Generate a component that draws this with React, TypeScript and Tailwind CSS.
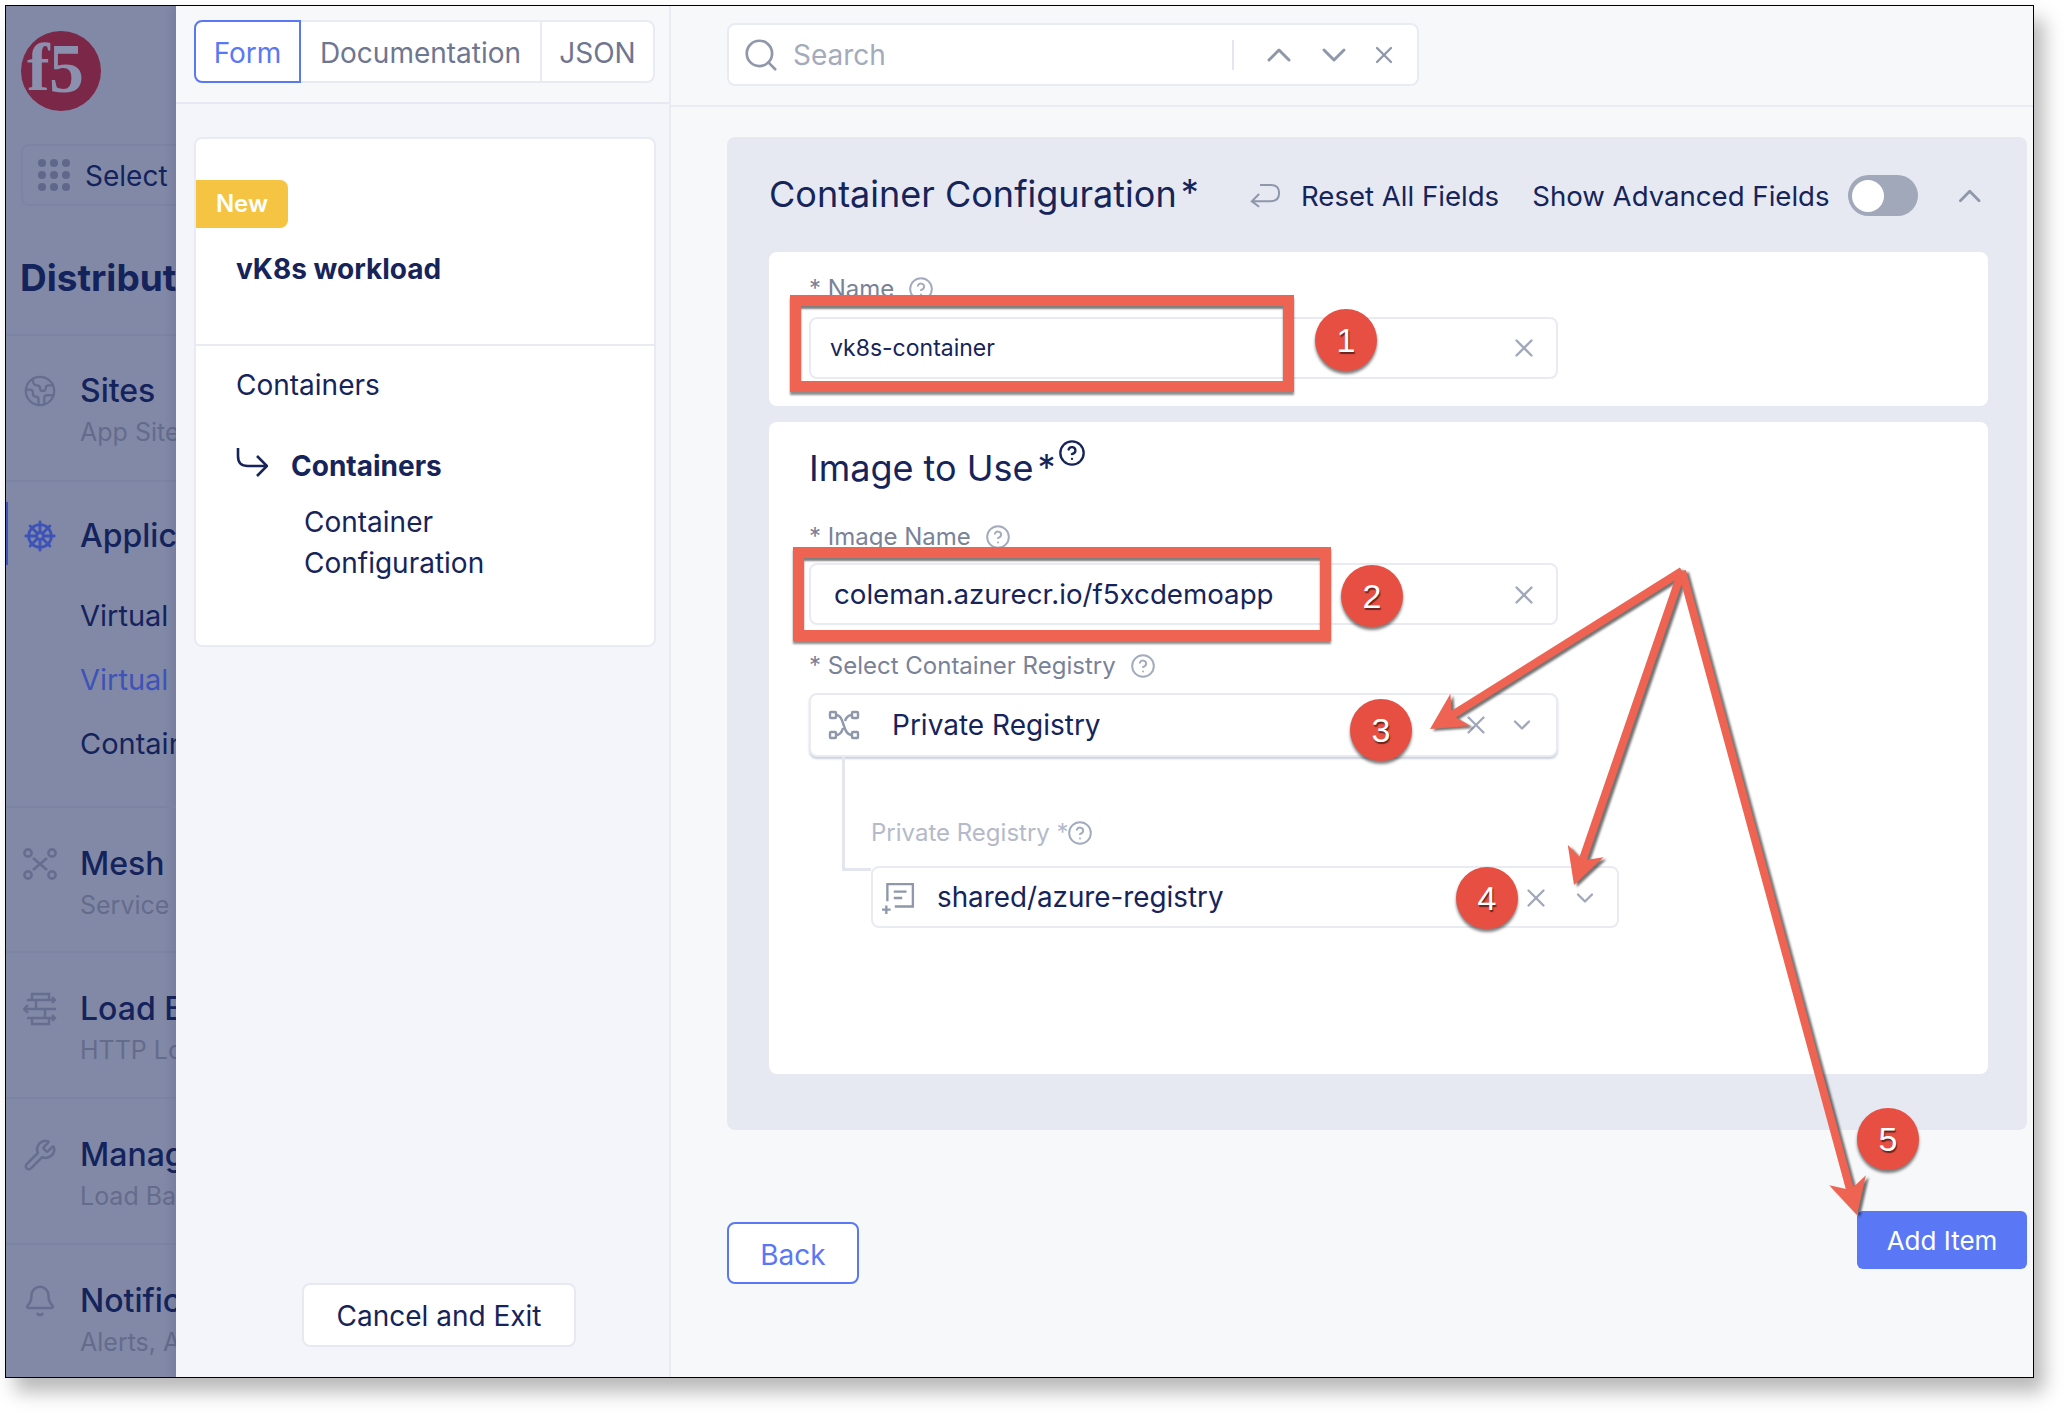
import { Bell, ChevronDown, ChevronUp, CircleHelp, Earth, Search, ShipWheel, Wrench, X } from 'lucide-react'
import type { ReactNode } from 'react'

const navy = 'text-[#16245a]'

function Help({ className = '' }: { className?: string }) {
  return <CircleHelp strokeWidth={1.8} className={`size-[26px] text-[#a3abbd] ${className}`} />
}

function Clear({ className = '' }: { className?: string }) {
  return <X strokeWidth={1.9} className={`size-[30px] text-[#a0a8ba] ${className}`} />
}

function MeshIcon() {
  return (
    <svg viewBox="0 0 34 34" className="size-[34px]" fill="none" stroke="#666e8f" strokeWidth="2.6">
      <circle cx="5" cy="6" r="3.6" />
      <circle cx="29" cy="6" r="3.6" />
      <circle cx="5" cy="28" r="3.6" />
      <circle cx="29" cy="28" r="3.6" />
      <path d="M10 11l14 12M24 11L10 23" />
    </svg>
  )
}

function BalancerIcon() {
  return (
    <svg viewBox="0 0 34 34" className="size-[34px]" fill="none" stroke="#666e8f" strokeWidth="2.4">
      <path d="M9 8V2h17v6M9 26v6h17v-6" />
      <path d="M1 17h32M5 13l-4 4 4 4M4 8h28M4 26h28M29 5l3 3-3 3M29 23l3 3-3 3" />
      <path d="M13 8v9M22 17v9" />
    </svg>
  )
}

function RegistryIcon() {
  return (
    <svg viewBox="0 0 32 30" className="h-[30px] w-[32px]" fill="none" stroke="#8f97ab" strokeWidth="2.4">
      <rect x="2" y="2" width="6" height="6" rx="1" />
      <rect x="24" y="2" width="6" height="6" rx="1" />
      <rect x="2" y="22" width="6" height="6" rx="1" />
      <rect x="24" y="22" width="6" height="6" rx="1" />
      <path d="M8 5c9 0 6 20 16 20M8 25c4 0 6-3 7-7M17 11c1-3 3-6 7-6" />
    </svg>
  )
}

function SharedIcon() {
  return (
    <svg viewBox="0 0 32 32" className="size-[34px]" fill="none" stroke="#8f97ab" strokeWidth="2.2">
      <path d="M6 19V3h24v21H13" />
      <path d="M12 10h12M12 16h8M5 23v8M1 27h8" />
    </svg>
  )
}

function NavItem({ icon, title, sub, top = 'pt-[36px]' }: { icon: ReactNode; title: string; sub?: string; top?: string }) {
  return (
    <div className={`flex gap-[23px] pl-[17px] ${top}`}>
      <div className="flex h-[40px] w-[34px] shrink-0 items-center justify-center">{icon}</div>
      <div className="whitespace-nowrap">
        <div className="text-[32px] leading-[40px] font-medium text-[#14235b]">{title}</div>
        {sub && <div className="mt-[3px] text-[25px] leading-[36px] text-[#646c8c]">{sub}</div>}
      </div>
    </div>
  )
}

function Sidebar() {
  return (
    <aside className="flex w-[170px] shrink-0 flex-col overflow-hidden bg-[#8289a7]">
      <div className="h-[330px] shrink-0 border-b-2 border-[#7c84a3] pt-[25px] pl-[14px]">
        <svg viewBox="0 0 82 80" className="h-[80px] w-[82px]">
          <circle cx="41" cy="40" r="40" fill="#7b2747" />
          <text x="7" y="59" fontFamily="Liberation Serif" fontWeight="700" fontSize="68" fill="#8a90ad">
            f
          </text>
          <text x="29" y="61" fontFamily="Liberation Serif" fontWeight="700" fontSize="70" fill="#8a90ad">
            5
          </text>
        </svg>
        <div className="mt-[33px] ml-[1px] -mr-[40px] flex h-[62px] items-center gap-[15px] rounded-[8px] border-2 border-[#7c84a3] pl-[15px]">
          <div className="grid shrink-0 grid-cols-3 gap-[4px]">
            {Array.from({ length: 9 }).map((_, i) => (
              <span key={i} className="size-[8px] rounded-full bg-[#5f678a]" />
            ))}
          </div>
          <span className="pt-[2px] text-[28px] whitespace-nowrap text-[#14235b]">Select</span>
        </div>
        <div className="mt-[49px] text-[37px] leading-[46px] font-bold whitespace-nowrap text-[#14235b]">Distributed Apps</div>
      </div>
      <div className="h-[146px] shrink-0 border-b-2 border-[#7c84a3]">
        <NavItem top="pt-[35px]" icon={<Earth className="size-[34px] text-[#666e8f]" strokeWidth={1.6} />} title="Sites" sub="App Sites" />
      </div>
      <div className="relative h-[326px] shrink-0 border-b-2 border-[#7c84a3]">
        <div className="absolute top-[20px] left-0 h-[63px] w-[2px] bg-[#3e53b8]" />
        <NavItem top="pt-[34px]" icon={<ShipWheel className="size-[34px] text-[#3e53b8]" strokeWidth={2} />} title="Applications" />
        <div className="mt-[40px] flex flex-col gap-[24px] pl-[74px] text-[29px] leading-[40px] whitespace-nowrap text-[#14235b]">
          <div>Virtual K8s</div>
          <div className="text-[#3e53b8]">Virtual Sites</div>
          <div>Containers</div>
        </div>
      </div>
      <div className="h-[145px] shrink-0 border-b-2 border-[#7c84a3]">
        <NavItem icon={<MeshIcon />} title="Mesh" sub="Service Mesh" />
      </div>
      <div className="h-[146px] shrink-0 border-b-2 border-[#7c84a3]">
        <NavItem icon={<BalancerIcon />} title="Load Balancers" sub="HTTP Load Balancers" />
      </div>
      <div className="h-[146px] shrink-0 border-b-2 border-[#7c84a3]">
        <NavItem icon={<Wrench className="size-[34px] text-[#666e8f]" strokeWidth={1.8} />} title="Manage" sub="Load Balancers" />
      </div>
      <NavItem icon={<Bell className="size-[34px] text-[#666e8f]" strokeWidth={1.8} />} title="Notifications" sub="Alerts, Audit" />
    </aside>
  )
}

function MiddlePanel() {
  return (
    <section className="flex w-[495px] shrink-0 flex-col border-r-2 border-[#e9ebf3] bg-[#f3f5fa] shadow-[-4px_0_8px_rgba(40,45,80,0.12)]">
      <div className="h-[98px] shrink-0 border-b-2 border-[#e7e9f2] bg-[#f7f8fa] pt-[14px] pl-[18px]">
        <div className="flex h-[63px] w-[461px] rounded-[8px] border-2 border-[#e9ebf3] bg-white pt-0 text-[28px]">
          <div className="-my-[2px] -ml-[2px] flex w-[107px] items-center justify-center rounded-l-[8px] border-2 border-[#5a78f5] pt-[2px] text-[#5a78f5]">Form</div>
          <div className="flex w-[241px] items-center justify-center border-r-2 border-[#e9ebf3] pt-[2px] text-[#6e7690]">Documentation</div>
          <div className="flex flex-1 items-center justify-center pt-[2px] text-[#6e7690]">JSON</div>
        </div>
      </div>
      <div className={`mt-[33px] ml-[18px] h-[510px] w-[462px] rounded-[8px] border-2 border-[#e9ebf3] bg-white ${navy}`}>
        <div className="h-[207px] border-b-2 border-[#e9ebf3] pt-[41px]">
          <div className="flex h-[48px] w-[92px] items-center justify-center rounded-r-[8px] bg-[#f6c443] text-[24px] font-semibold text-white">New</div>
          <div className="mt-[23px] pl-[40px] text-[28px] leading-[36px] font-bold">vK8s workload</div>
        </div>
        <div className="pt-[21px] pl-[40px] text-[28px]">
          <div className="leading-[36px]">Containers</div>
          <div className="mt-[45px] flex h-[36px] items-center gap-[23px]">
            <svg viewBox="0 0 32 30" className="-mt-[8px] h-[30px] w-[32px]" fill="none" stroke="#16245a" strokeWidth="2.6">
              <path d="M2 1v8c0 7 3 10 10 10h18M21 9l10 10-10 10" />
            </svg>
            <span className="font-bold">Containers</span>
          </div>
          <div className="mt-[18px] pl-[68px] leading-[41px]">
            Container
            <br />
            Configuration
          </div>
        </div>
      </div>
      <button className={`mt-auto mb-[30px] ml-[126px] h-[64px] w-[274px] rounded-[8px] border-2 border-[#e7e9f2] bg-white pt-[2px] text-[28px] ${navy}`}>
        Cancel and Exit
      </button>
    </section>
  )
}

function FieldLabel({ children, className = '' }: { children: ReactNode; className?: string }) {
  return <div className={`flex h-[34px] items-center gap-[14px] text-[24px] text-[#7a8298] ${className}`}>{children}</div>
}

function Field({ children, className = '' }: { children: ReactNode; className?: string }) {
  return <div className={`flex items-center rounded-[8px] border-2 border-[#e9ebf3] bg-white ${className}`}>{children}</div>
}

function RightPanel() {
  return (
    <main className="flex min-w-0 flex-1 flex-col bg-[#f7f8fa]">
      <div className="h-[101px] shrink-0 border-b-2 border-[#e9ebf3] pt-[17px] pl-[56px]">
        <div className="flex h-[63px] w-[692px] items-center rounded-[8px] border-2 border-[#e9ebf3] bg-white pl-[13px]">
          <Search className="size-[38px] text-[#8f97ab]" strokeWidth={1.7} />
          <span className="ml-[13px] w-[439px] text-[28px] text-[#a3abbd]">Search</span>
          <span className="h-[30px] w-[2px] bg-[#e3e6ee]" />
          <ChevronUp className="ml-[25px] size-[40px] text-[#8f97ab]" strokeWidth={1.8} />
          <ChevronDown className="ml-[15px] size-[40px] text-[#8f97ab]" strokeWidth={1.8} />
          <X className="ml-[16px] size-[28px] text-[#8f97ab]" strokeWidth={2} />
        </div>
      </div>

      <div className="mt-[30px] ml-[56px] w-[1300px] rounded-[8px] bg-[#e6e9f2] pr-[39px] pb-[56px] pl-[42px]">
        <div className={`flex h-[115px] items-start pt-[33px] ${navy}`}>
          <div className="flex w-[427px] shrink-0 text-[36px] leading-[48px] whitespace-nowrap">
            Container Configuration<span className="ml-[4px] -mt-[2px]">*</span>
          </div>
          <svg viewBox="0 0 34 30" className="mt-[7px] ml-[54px] h-[34px] w-[38px]" fill="none" stroke="#8f97ab" strokeWidth="2.2">
            <path d="M32 14c0 6-3 9-9 9H2M10 15l-8 8 8 6M32 14c0-6-3-9-9-9H11" />
          </svg>
          <span className="mt-[6px] ml-[20px] text-[27.6px] leading-[40px] whitespace-nowrap">Reset All Fields</span>
          <span className="mt-[6px] ml-[33px] text-[27.6px] leading-[40px] whitespace-nowrap">Show Advanced Fields</span>
          <div className="mt-[5px] ml-[18px] flex h-[41px] w-[70px] shrink-0 items-center rounded-full bg-[#a0a8ba] pl-[4px]">
            <span className="size-[32px] rounded-full bg-white" />
          </div>
          <ChevronUp className="mt-[3px] ml-[33px] size-[46px] text-[#8f97ab]" strokeWidth={1.8} />
        </div>

        <div className="h-[154px] rounded-[8px] bg-white pt-[20px] pl-[40px]">
          <FieldLabel className="gap-[14px]">
            * Name
            <Help />
          </FieldLabel>
          <Field className={`mt-[11px] h-[62px] w-[749px] justify-between pr-[17px] pl-[19px] text-[23px] ${navy}`}>
            vk8s-container
            <Clear />
          </Field>
        </div>

        <div className="mt-[16px] h-[652px] rounded-[8px] bg-white pt-[24px] pl-[40px]">
          <div className={`flex h-[44px] items-center text-[36px] ${navy}`}>
            Image to Use<span className="mt-[-2px] ml-[4px]">*</span>
            <CircleHelp strokeWidth={2} className="mb-[30px] ml-[2px] size-[28px]" />
          </div>
          <FieldLabel className="mt-[30px]">
            * Image Name
            <Help />
          </FieldLabel>
          <Field className={`mt-[9px] h-[62px] w-[749px] justify-between pt-[1px] pr-[17px] pl-[23px] text-[27.7px] ${navy}`}>
            coleman.azurecr.io/f5xcdemoapp
            <Clear />
          </Field>
          <FieldLabel className="mt-[24px]">
            * Select Container Registry
            <Help />
          </FieldLabel>
          <Field className={`mt-[10px] h-[64px] w-[749px] border-[#d8dce8] pr-[20px] pl-[17px] text-[28px] ${navy} shadow-[0_2px_2px_rgba(90,100,140,0.3)]`}>
            <RegistryIcon />
            <span className="ml-[32px] flex-1">Private Registry</span>
            <Clear className="mr-[17px]" />
            <ChevronDown className="size-[28px] text-[#a0a8ba]" strokeWidth={2} />
          </Field>
          <div className="ml-[33px] flex">
            <div className="h-[114px] w-[29px] shrink-0 border-b-[3px] border-l-[3px] border-[#e3e6ef]" />
            <div className="pt-[59px]">
              <div className="flex h-[34px] items-center text-[24px] text-[#b4bac9]">
                Private Registry *
                <Help className="-ml-[2px] text-[#8f97ab]" />
              </div>
              <Field className={`mt-[16px] h-[62px] w-[748px] pt-[1px] pr-[18px] pl-[8px] text-[27.8px] ${navy}`}>
                <SharedIcon />
                <span className="ml-[22px] flex-1">shared/azure-registry</span>
                <Clear className="mr-[20px]" />
                <ChevronDown className="size-[28px] text-[#a0a8ba]" strokeWidth={2} />
              </Field>
            </div>
          </div>
        </div>
      </div>

      <div className="mt-[81px] ml-[56px] flex w-[1300px] items-start justify-between">
        <button className="mt-[11px] h-[62px] w-[132px] rounded-[8px] border-2 border-[#5a78f5] bg-white pt-[3px] text-[28px] text-[#5a78f5]">Back</button>
        <button className="h-[58px] w-[170px] rounded-[6px] bg-[#5a78f5] text-[26px] text-white">Add Item</button>
      </div>
    </main>
  )
}

// polygon of a line with a swept back head, from (ax,ay) to the tip (bx,by)
function arrow(ax: number, ay: number, bx: number, by: number) {
  const len = Math.hypot(bx - ax, by - ay)
  const ux = (bx - ax) / len
  const uy = (by - ay) / len
  const at = (along: number, side: number) => `${bx - ux * along - uy * side},${by - uy * along + ux * side}`
  const start = (side: number) => `${ax - uy * side},${ay + ux * side}`
  return [start(4), at(28, 4), at(36, 19), at(0, 0), at(36, -19), at(28, -4), start(-4)].join(' ')
}

const badges = [
  { n: 1, cls: 'left-[1315px] top-[309px]' },
  { n: 2, cls: 'left-[1341px] top-[565px]' },
  { n: 3, cls: 'left-[1350px] top-[699px]' },
  { n: 4, cls: 'left-[1456px] top-[867px]' },
  { n: 5, cls: 'left-[1857px] top-[1108px]' },
]

function Annotations() {
  return (
    <>
      <div className="absolute top-[295px] left-[790px] h-[97px] w-[504px] border-[11px] border-[#ee6352] shadow-[0_3px_2px_rgba(0,0,0,0.45),inset_0_3px_2px_rgba(0,0,0,0.5)]" />
      <div className="absolute top-[547px] left-[793px] h-[94px] w-[538px] border-[11px] border-[#ee6352] shadow-[0_3px_2px_rgba(0,0,0,0.45),inset_0_3px_2px_rgba(0,0,0,0.5)]" />
      <svg className="absolute top-0 left-0 h-[1413px] w-[2069px] drop-shadow-[3px_2px_1px_rgba(0,0,0,0.55)]" viewBox="0 0 2069 1413">
        <polygon fill="#ee6352" points={arrow(1682, 571, 1430, 729)} />
        <polygon fill="#ee6352" points={arrow(1682, 571, 1574, 885)} />
        <polygon fill="#ee6352" points={arrow(1682, 571, 1857, 1215)} />
      </svg>
      {badges.map((b) => (
        <div
          key={b.n}
          className={`absolute flex size-[62px] items-center justify-center rounded-full bg-[#e74f42] font-['Liberation_Sans',sans-serif] text-[34px] text-white shadow-[0_3px_3px_rgba(0,0,0,0.5)] [text-shadow:1px_2px_1px_rgba(0,0,0,0.55)] ${b.cls}`}
        >
          {b.n}
        </div>
      ))}
    </>
  )
}

export default function App() {
  return (
    <div className="relative h-[1413px] w-[2069px] overflow-hidden bg-white pt-[5px] pl-[5px] font-['Inter',sans-serif]">
      <div className="flex h-[1373px] w-[2029px] overflow-hidden border border-black shadow-[10px_14px_18px_rgba(0,0,0,0.28)]">
        <Sidebar />
        <MiddlePanel />
        <RightPanel />
      </div>
      <Annotations />
    </div>
  )
}
